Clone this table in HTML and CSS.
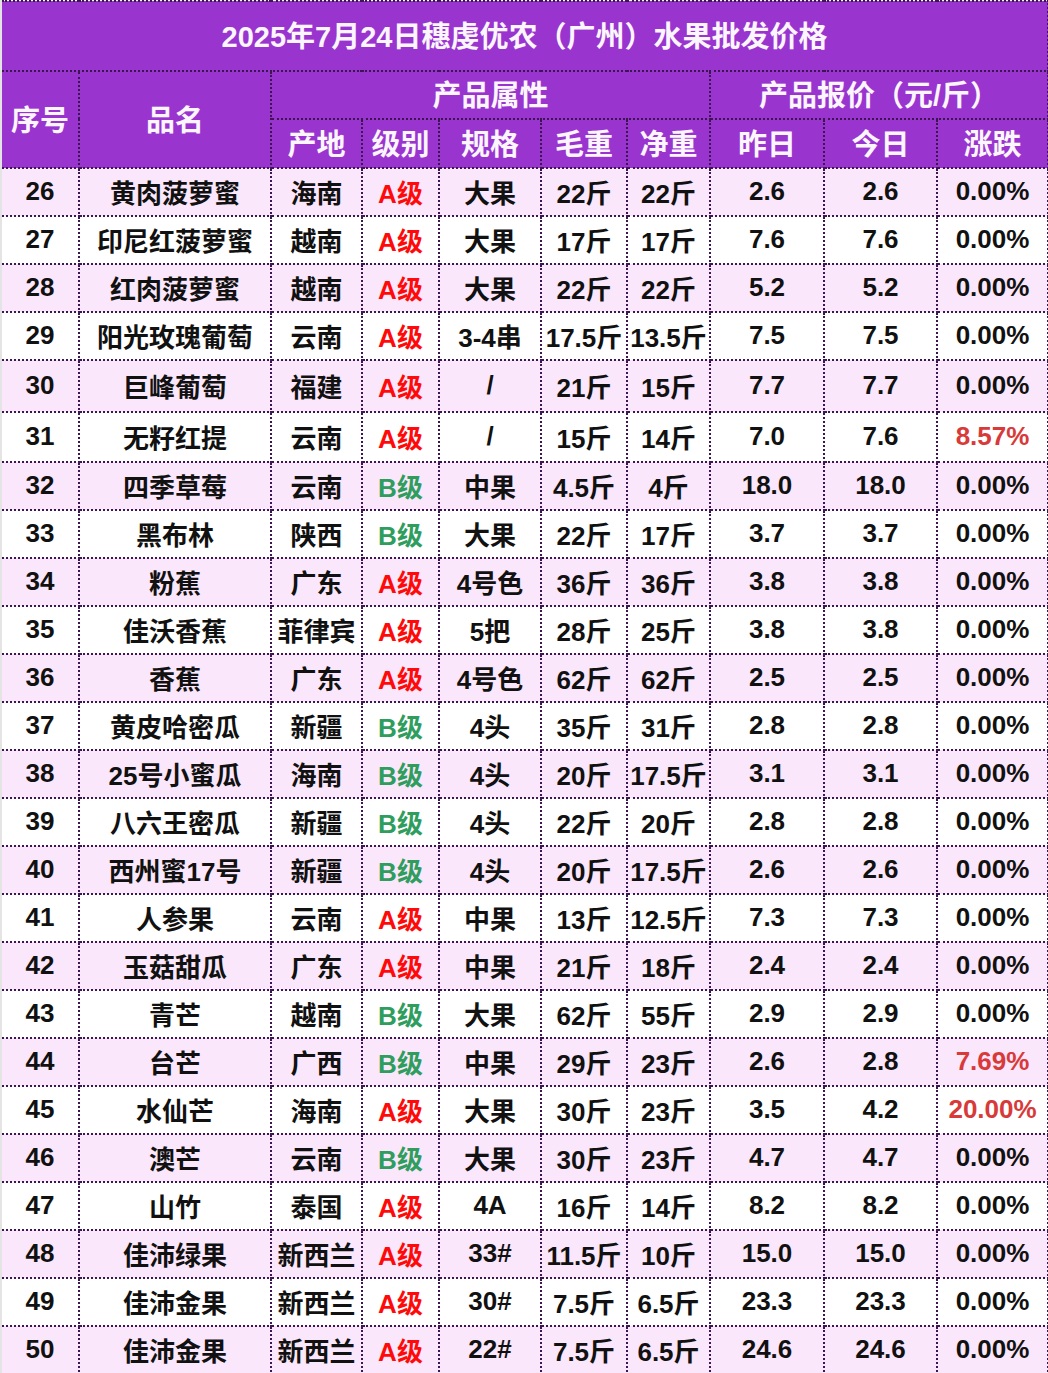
FILE: index.html
```html
<!DOCTYPE html>
<html lang="zh">
<head>
<meta charset="utf-8">
<title>水果批发价格</title>
<link rel="stylesheet" href="styles.css">
</head>
<body>
<table class="sheet">
  <colgroup>
    <col class="c-no"><col class="c-name"><col class="c-origin"><col class="c-grade"><col class="c-spec"><col class="c-gross"><col class="c-net"><col class="c-yest"><col class="c-today"><col class="c-chg">
  </colgroup>
  <thead>
    <tr class="title-row"><th colspan="10" class="title">2025年7月24日穗虔优农（广州）水果批发价格</th></tr>
    <tr class="head1">
      <th rowspan="2">序号</th>
      <th rowspan="2">品名</th>
      <th colspan="5">产品属性</th>
      <th colspan="3">产品报价（元/斤）</th>
    </tr>
    <tr class="head2">
      <th>产地</th><th>级别</th><th>规格</th><th>毛重</th><th>净重</th><th>昨日</th><th>今日</th><th>涨跌</th>
    </tr>
  </thead>
  <tbody>
    <tr class="pink"><td>26</td><td>黄肉菠萝蜜</td><td>海南</td><td class="ga">A级</td><td>大果</td><td>22斤</td><td>22斤</td><td>2.6</td><td>2.6</td><td>0.00%</td></tr>
    <tr><td>27</td><td>印尼红菠萝蜜</td><td>越南</td><td class="ga">A级</td><td>大果</td><td>17斤</td><td>17斤</td><td>7.6</td><td>7.6</td><td>0.00%</td></tr>
    <tr class="pink"><td>28</td><td>红肉菠萝蜜</td><td>越南</td><td class="ga">A级</td><td>大果</td><td>22斤</td><td>22斤</td><td>5.2</td><td>5.2</td><td>0.00%</td></tr>
    <tr><td>29</td><td>阳光玫瑰葡萄</td><td>云南</td><td class="ga">A级</td><td>3-4串</td><td>17.5斤</td><td>13.5斤</td><td>7.5</td><td>7.5</td><td>0.00%</td></tr>
    <tr class="pink tall"><td>30</td><td>巨峰葡萄</td><td>福建</td><td class="ga">A级</td><td>/</td><td>21斤</td><td>15斤</td><td>7.7</td><td>7.7</td><td>0.00%</td></tr>
    <tr class="tall2"><td>31</td><td>无籽红提</td><td>云南</td><td class="ga">A级</td><td>/</td><td>15斤</td><td>14斤</td><td>7.0</td><td>7.6</td><td class="up">8.57%</td></tr>
    <tr class="pink"><td>32</td><td>四季草莓</td><td>云南</td><td class="gb">B级</td><td>中果</td><td>4.5斤</td><td>4斤</td><td>18.0</td><td>18.0</td><td>0.00%</td></tr>
    <tr><td>33</td><td>黑布林</td><td>陕西</td><td class="gb">B级</td><td>大果</td><td>22斤</td><td>17斤</td><td>3.7</td><td>3.7</td><td>0.00%</td></tr>
    <tr class="pink"><td>34</td><td>粉蕉</td><td>广东</td><td class="ga">A级</td><td>4号色</td><td>36斤</td><td>36斤</td><td>3.8</td><td>3.8</td><td>0.00%</td></tr>
    <tr><td>35</td><td>佳沃香蕉</td><td>菲律宾</td><td class="ga">A级</td><td>5把</td><td>28斤</td><td>25斤</td><td>3.8</td><td>3.8</td><td>0.00%</td></tr>
    <tr class="pink"><td>36</td><td>香蕉</td><td>广东</td><td class="ga">A级</td><td>4号色</td><td>62斤</td><td>62斤</td><td>2.5</td><td>2.5</td><td>0.00%</td></tr>
    <tr><td>37</td><td>黄皮哈密瓜</td><td>新疆</td><td class="gb">B级</td><td>4头</td><td>35斤</td><td>31斤</td><td>2.8</td><td>2.8</td><td>0.00%</td></tr>
    <tr class="pink"><td>38</td><td>25号小蜜瓜</td><td>海南</td><td class="gb">B级</td><td>4头</td><td>20斤</td><td>17.5斤</td><td>3.1</td><td>3.1</td><td>0.00%</td></tr>
    <tr><td>39</td><td>八六王密瓜</td><td>新疆</td><td class="gb">B级</td><td>4头</td><td>22斤</td><td>20斤</td><td>2.8</td><td>2.8</td><td>0.00%</td></tr>
    <tr class="pink"><td>40</td><td>西州蜜17号</td><td>新疆</td><td class="gb">B级</td><td>4头</td><td>20斤</td><td>17.5斤</td><td>2.6</td><td>2.6</td><td>0.00%</td></tr>
    <tr><td>41</td><td>人参果</td><td>云南</td><td class="ga">A级</td><td>中果</td><td>13斤</td><td>12.5斤</td><td>7.3</td><td>7.3</td><td>0.00%</td></tr>
    <tr class="pink"><td>42</td><td>玉菇甜瓜</td><td>广东</td><td class="ga">A级</td><td>中果</td><td>21斤</td><td>18斤</td><td>2.4</td><td>2.4</td><td>0.00%</td></tr>
    <tr><td>43</td><td>青芒</td><td>越南</td><td class="gb">B级</td><td>大果</td><td>62斤</td><td>55斤</td><td>2.9</td><td>2.9</td><td>0.00%</td></tr>
    <tr class="pink"><td>44</td><td>台芒</td><td>广西</td><td class="gb">B级</td><td>中果</td><td>29斤</td><td>23斤</td><td>2.6</td><td>2.8</td><td class="up">7.69%</td></tr>
    <tr><td>45</td><td>水仙芒</td><td>海南</td><td class="ga">A级</td><td>大果</td><td>30斤</td><td>23斤</td><td>3.5</td><td>4.2</td><td class="up">20.00%</td></tr>
    <tr class="pink"><td>46</td><td>澳芒</td><td>云南</td><td class="gb">B级</td><td>大果</td><td>30斤</td><td>23斤</td><td>4.7</td><td>4.7</td><td>0.00%</td></tr>
    <tr><td>47</td><td>山竹</td><td>泰国</td><td class="ga">A级</td><td>4A</td><td>16斤</td><td>14斤</td><td>8.2</td><td>8.2</td><td>0.00%</td></tr>
    <tr class="pink"><td>48</td><td>佳沛绿果</td><td>新西兰</td><td class="ga">A级</td><td>33#</td><td>11.5斤</td><td>10斤</td><td>15.0</td><td>15.0</td><td>0.00%</td></tr>
    <tr><td>49</td><td>佳沛金果</td><td>新西兰</td><td class="ga">A级</td><td>30#</td><td>7.5斤</td><td>6.5斤</td><td>23.3</td><td>23.3</td><td>0.00%</td></tr>
    <tr class="pink"><td>50</td><td>佳沛金果</td><td>新西兰</td><td class="ga">A级</td><td>22#</td><td>7.5斤</td><td>6.5斤</td><td>24.6</td><td>24.6</td><td>0.00%</td></tr>
  </tbody>
</table>
</body>
</html>
```

FILE: styles.css
```css
html, body {
  margin: 0;
  padding: 0;
}
body {
  background: #e4e4e4;
  width: 1048px;
  height: 1373px;
  overflow: hidden;
}
.sheet {
  margin-left: 2px;
  width: 1046px;
  table-layout: fixed;
  border-collapse: collapse;
  font-family: "Liberation Sans", "Noto Sans CJK SC", Arial, sans-serif;
  font-weight: 700;
  background: #ffffff;
}
.c-no { width: 77px; }
.c-name { width: 192px; }
.c-origin { width: 91px; }
.c-grade { width: 77px; }
.c-spec { width: 102px; }
.c-gross { width: 86px; }
.c-net { width: 83px; }
.c-yest { width: 114px; }
.c-today { width: 113px; }
.c-chg { width: 111px; }

.sheet th, .sheet td {
  border: 2px dotted #3b1650;
  padding: 0;
  text-align: center;
  vertical-align: middle;
  white-space: nowrap;
  overflow: visible;
}
.sheet tr > :first-child { border-left: none; }

.sheet th {
  background: #9a34cf;
  color: #fbf6fd;
  font-size: 29px;
  font-weight: 700;
  padding-bottom: 4px;
}
.title-row { height: 70px; }
.sheet th.title {
  font-size: 29px;
  border-top: 2px dotted #3b1650;
  padding-bottom: 5px;
}
.head1 { height: 48px; }
.head2 { height: 49px; }

.sheet td {
  font-size: 26px;
  color: #111111;
  padding-bottom: 2px;
}
.sheet tbody tr { height: 48px; }
.sheet tbody tr.tall { height: 52px; }
.sheet tbody tr.tall2 { height: 50px; }
.sheet tr.pink td { background: #fbe7fb; }

.ga { color: #ff0a0a !important; }
.gb { color: #2f9d5d !important; }
.up { color: #d83a3a !important; }
```
